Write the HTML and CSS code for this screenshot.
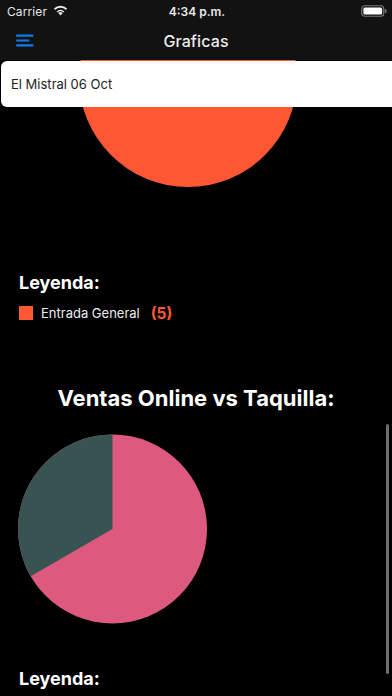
FILE: index.html
```html
<!DOCTYPE html>
<html lang="es">
<head>
<meta charset="utf-8">
<title>Graficas</title>
<link rel="stylesheet" href="styles.css">
</head>
<body>
<div class="screen">
  <header class="top">
    <div class="status">
      <div class="status-left">
        <span class="carrier">Carrier</span>
        <svg class="wifi" width="15" height="11" viewBox="0 0 15 11">
          <path d="M7.5 10.6 L5.2 8.1 A3.3 3.3 0 0 1 9.8 8.1 Z" fill="#e6e6e6"/>
          <path d="M3.6 6.4 A5.6 5.6 0 0 1 11.4 6.4 L10.4 7.5 A4 4 0 0 0 4.6 7.5 Z" fill="#e6e6e6"/>
          <path d="M0.9 3.6 A9.3 9.3 0 0 1 14.1 3.6 L12.9 4.9 A7.6 7.6 0 0 0 2.1 4.9 Z" fill="#e6e6e6"/>
        </svg>
      </div>
      <span class="time">4:34 p.m.</span>
      <div class="status-right">
        <svg class="battery" width="26" height="12" viewBox="0 0 26 12">
          <rect x="0.75" y="0.75" width="22" height="10.5" rx="3" fill="none" stroke="#7a7a7a" stroke-width="1.2"/>
          <rect x="2.4" y="2.4" width="18.7" height="7.2" rx="1.5" fill="#ffffff"/>
          <rect x="23.8" y="4" width="1.6" height="4" rx="0.8" fill="#7a7a7a"/>
        </svg>
      </div>
    </div>
    <nav class="navbar">
      <svg class="menu" width="18" height="13" viewBox="0 0 18 13">
        <rect x="0" y="0.5" width="17.5" height="2.2" rx="1" fill="#0a7cf0"/>
        <rect x="0" y="5.4" width="13.5" height="2.2" rx="1" fill="#0a7cf0"/>
        <rect x="0" y="10.3" width="17.5" height="2.2" rx="1" fill="#0a7cf0"/>
      </svg>
      <h1 class="title">Graficas</h1>
    </nav>
  </header>
  <main class="content">
    <div class="selector">El Mistral 06 Oct</div>
    <div class="scroller">
      <div class="scroll-inner">
        <svg class="pie-one" width="392" height="218" viewBox="0 0 392 218">
          <circle cx="188" cy="109" r="109" fill="#ff5733"/>
        </svg>
        <h2 class="legend-title legend-first">Leyenda:</h2>
        <div class="legend-row">
          <span class="swatch"></span>
          <span class="legend-label">Entrada General</span>
          <span class="legend-count">(5)</span>
        </div>
        <h2 class="section-title">Ventas Online vs Taquilla:</h2>
        <svg class="pie-two" width="392" height="190" viewBox="0 0 392 190">
          <circle cx="112.5" cy="95" r="94.5" fill="#dd5a7e"/>
          <path d="M112.5 95 L112.5 0.5 A94.5 94.5 0 0 0 30.66 142.25 Z" fill="#375452"/>
        </svg>
        <h2 class="legend-title legend-second">Leyenda:</h2>
      </div>
      <div class="scrollbar"></div>
    </div>
  </main>
</div>
</body>
</html>
```
FILE: styles.css
```css
* { box-sizing: border-box; }
html, body { margin: 0; padding: 0; background: #000; }
body {
  font-family: Inter, "Liberation Sans", Roboto, sans-serif;
  color: #fff;
}
.screen {
  width: 392px;
  height: 696px;
  overflow: hidden;
  display: flex;
  flex-direction: column;
  background: #000;
}
.top {
  background: #121212;
  height: 60px;
  flex: none;
}
.status {
  height: 22px;
  display: grid;
  grid-template-columns: 1fr auto 1fr;
  align-items: center;
  padding: 0 5px 0 7px;
}
.status-left {
  display: flex;
  align-items: center;
  gap: 6px;
}
.carrier {
  font-size: 12px;
  color: #e6e6e6;
  letter-spacing: 0.1px;
}
.wifi { display: block; margin-top: -1px; }
.time {
  font-size: 12px;
  font-weight: 600;
  color: #e8e8e8;
}
.status-right {
  display: flex;
  justify-content: flex-end;
}
.battery { display: block; margin-top: -1px; }
.navbar {
  height: 38px;
  position: relative;
  display: flex;
  align-items: center;
  justify-content: center;
}
.menu {
  position: absolute;
  left: 16px;
  top: 12px;
}
.title {
  margin: 0;
  font-size: 16px;
  font-weight: 500;
  color: #ececec;
  letter-spacing: 0.1px;
}
.content {
  flex: 1;
  position: relative;
  overflow: hidden;
}
.selector {
  position: absolute;
  z-index: 2;
  left: 1px;
  right: -10px;
  top: 1px;
  height: 46px;
  background: #fff;
  border-radius: 6px;
  color: #1e1e1e;
  font-size: 13px;
  display: flex;
  align-items: center;
  padding-left: 10px;
}
.scroller {
  height: 100%;
  position: relative;
  display: flow-root;
}
.scroll-inner {
  margin-top: -91px;
  display: flex;
  flex-direction: column;
}
.pie-one, .pie-two { display: block; flex: none; }
.legend-title {
  margin: 0;
  padding-left: 19px;
  font-size: 18px;
  font-weight: 700;
  line-height: 24px;
  color: #fff;
}
.legend-first { margin-top: 84px; }
.legend-row {
  margin-top: 8px;
  height: 20px;
  padding-left: 19px;
  display: flex;
  align-items: center;
}
.swatch {
  width: 14px;
  height: 14px;
  background: #ff5733;
  margin-right: 8px;
}
.legend-label {
  font-size: 13px;
  color: #ececec;
}
.legend-count {
  margin-left: 11px;
  font-size: 15.5px;
  font-weight: 700;
  color: #ff5733;
}
.section-title {
  margin: 61px 0 0;
  text-align: center;
  font-size: 22px;
  font-weight: 700;
  line-height: 28px;
  color: #fff;
}
.pie-two { margin-top: 22px; }
.legend-second { margin-top: 43px; }
.scrollbar {
  position: absolute;
  right: 3px;
  top: 364px;
  width: 3px;
  height: 250px;
  border-radius: 2px;
  background: #6f6f6f;
}
```
